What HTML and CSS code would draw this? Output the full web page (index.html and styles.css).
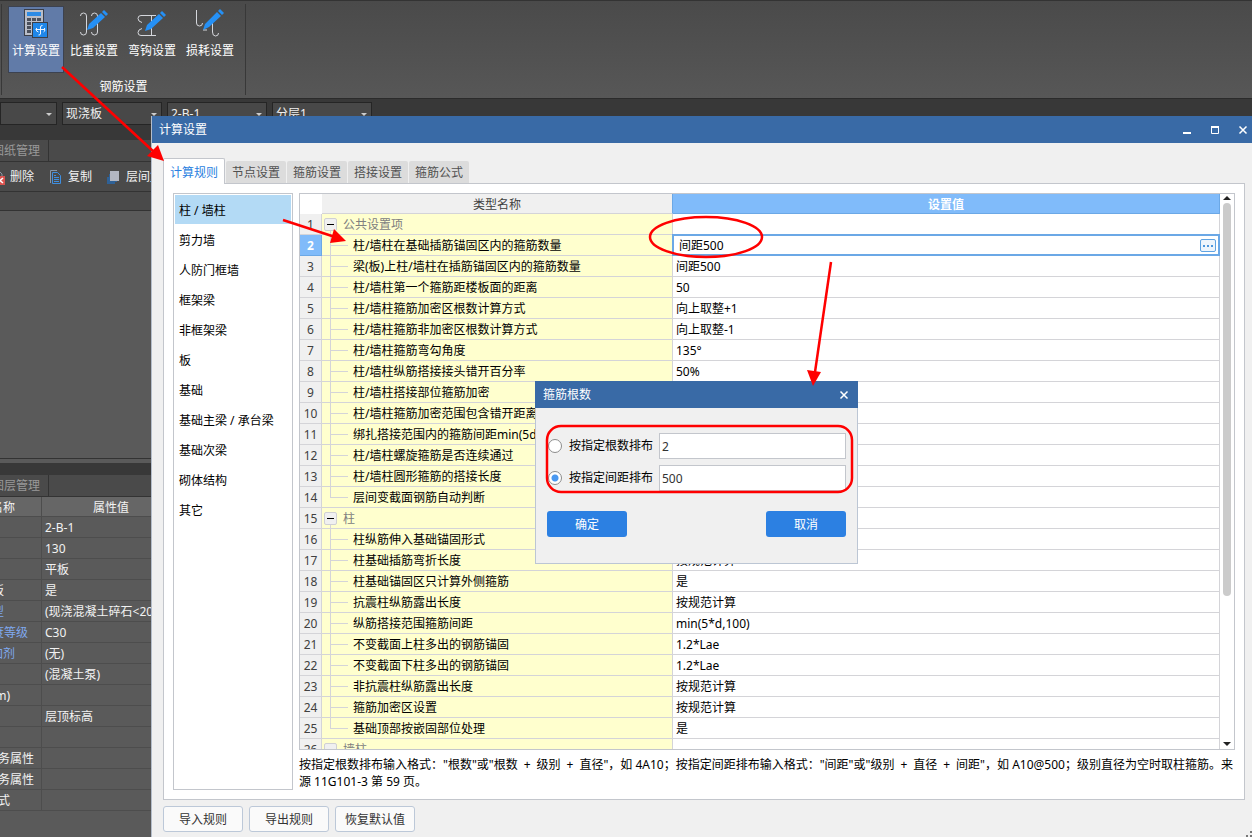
FILE: index.html
```html
<!DOCTYPE html>
<html lang="zh-CN">
<head>
<meta charset="utf-8">
<title>计算设置</title>
<link rel="stylesheet" href="styles.css">
</head>
<body>
<div class="app">
  <header class="ribbon">
    <section class="ribbon-group">
      <div class="ribbon-tools">
        <button class="tool tool-active" type="button">
          <svg width="32" height="32" viewBox="0 0 32 32">
            <rect x="4.500" y="2.500" width="19" height="26" fill="#b9bdc8" stroke="#3b3f49"/>
            <rect x="7" y="5" width="14" height="4" fill="#2a8ae6"/>
            <path d="M7 11h4v3H7zM12 11h4v3h-4zM17 11h4v3h-4zM7 15h4v3H7zM7 19h4v3H7zM7 23h4v3H7z" fill="#4b505c"/>
            <rect x="12.500" y="15.500" width="15" height="15" fill="#1f87ea" stroke="#3b3f49"/>
            <path d="M15.500 22.500h9M20.500 27v-7q0-1.500 2-1.500M20.500 27q0 1-2 1M16.500 21q-1 4 2 4M23.500 25q2 0 1-4" fill="none" stroke="#eef4ff"/>
          </svg>
          <span>计算设置</span>
        </button>
        <button class="tool" type="button">
          <svg width="32" height="32" viewBox="0 0 32 32">
            <path d="M2.500 9q0-3 3-3t3 3v16q0 3-3 3t-3-3M13.500 9q0-3 3-3t3 3v16q0 3-3 3t-3-3" fill="none" stroke="#d5d7dc"/>
            <path d="M9 23l2-6L23 6l4 4-12 11zM24 5l2-2 4 4-2 2z" fill="#2590f5"/>
          </svg>
          <span>比重设置</span>
        </button>
        <button class="tool" type="button">
          <svg width="32" height="32" viewBox="0 0 32 32">
            <path d="M20 8.500H5q-3 0-3 3t4 4M20 28.500H5q-3 0-3-3t4-4M15.500 8v20M13 8.500h5M13 28.500h5" fill="none" stroke="#d5d7dc"/>
            <path d="M9 24l2-6L23 7l4 4-12 11zM24 6l2-2 4 4-2 2z" fill="#2590f5"/>
          </svg>
          <span>弯钩设置</span>
        </button>
        <button class="tool" type="button">
          <svg width="32" height="32" viewBox="0 0 32 32">
            <path d="M2.500 3v13q0 3 3 3t3-3M18.500 15v10q0 4 3 4t3-3M9 23h4" fill="none" stroke="#d5d7dc"/>
            <path d="M9 23l2-6L23 5l4 4-12 11zM24 4l2-2 4 4-2 2z" fill="#2590f5"/>
          </svg>
          <span>损耗设置</span>
        </button>
      </div>
      <div class="ribbon-title">钢筋设置</div>
    </section>
  </header>

  <div class="selectors">
    <label class="picker picker-first"><select aria-label="楼层"><option></option></select></label>
    <label class="picker"><select aria-label="构件类型"><option>现浇板</option></select></label>
    <label class="picker"><select aria-label="构件"><option>2-B-1</option></select></label>
    <label class="picker"><select aria-label="分层"><option>分层1</option></select></label>
  </div>

  <aside class="dock">
    <div class="dock-tabs"><span class="dock-tab">图纸管理</span></div>
    <div class="dock-tools">
      <button class="dock-tool tool-delete" type="button">
        <svg width="16" height="16" viewBox="0 0 16 16"><path d="M1 1h7l4 4v10H1z" fill="none" stroke="#8c97a5"/><rect x="5" y="7" width="10" height="9" fill="#d9534f"/><path d="M7 9l6 5M13 9l-6 5" stroke="#fff" stroke-width="1.500"/></svg>
        <span>删除</span>
      </button>
      <button class="dock-tool" type="button">
        <svg width="16" height="16" viewBox="0 0 16 16"><path d="M2.500 14V1.500H9" fill="none" stroke="#8796a8"/><path d="M4.500 3.500h5l3 3v8h-8z" fill="none" stroke="#3e8ee0"/><path d="M6 8.500h5M6 10.500h5M6 12.500h5M6 6.500h2" stroke="#3e8ee0"/></svg>
        <span>复制</span>
      </button>
      <button class="dock-tool" type="button">
        <svg width="16" height="16" viewBox="0 0 16 16"><path d="M1 8h2v5h6v2H1zM3 5h2v7h6v1H3z" fill="#2f6196"/><rect x="4" y="2" width="9" height="10" fill="#b3b7c2"/></svg>
        <span>层间复制</span>
      </button>
    </div>
    <div class="dock-bar"></div>
    <div class="dock-view"></div>
    <div class="dock-split"></div>
    <div class="dock-tabs"><span class="dock-tab">图层管理</span></div>
    <table class="props">
      <thead><tr><th><span>名称</span></th><th>属性值</th></tr></thead>
      <tbody>
        <tr><td></td><td>2-B-1</td></tr>
        <tr><td></td><td>130</td></tr>
        <tr><td></td><td>平板</td></tr>
        <tr><td><span class="end-1">板</span></td><td>是</td></tr>
        <tr><td><span class="end-1 linked">型</span></td><td>(现浇混凝土碎石&lt;20)</td></tr>
        <tr><td><span class="end-4 linked">度等级</span></td><td>C30</td></tr>
        <tr><td><span class="end-3 linked">加剂</span></td><td>(无)</td></tr>
        <tr><td></td><td>(混凝土泵)</td></tr>
        <tr><td><span class="end-2">m)</span></td><td></td></tr>
        <tr><td></td><td>层顶标高</td></tr>
        <tr><td></td><td></td></tr>
        <tr><td><span class="end-5">务属性</span></td><td></td></tr>
        <tr><td><span class="end-5">务属性</span></td><td></td></tr>
        <tr><td><span class="end-2">式</span></td><td></td></tr>
      </tbody>
    </table>
  </aside>

  <main class="dialog">
    <div class="titlebar">
      <span>计算设置</span>
      <div class="window-controls">
        <button type="button" aria-label="最小化"><svg width="10" height="10" viewBox="0 0 10 10"><path d="M1 8h8" stroke="#fff" stroke-width="2"/></svg></button>
        <button type="button" aria-label="最大化"><svg width="10" height="10" viewBox="0 0 10 10"><path d="M1.500 2v6.500h7V2" fill="none" stroke="#fff"/><path d="M1 2h8" stroke="#fff" stroke-width="2"/></svg></button>
        <button type="button" aria-label="关闭"><svg width="10" height="10" viewBox="0 0 10 10"><path d="M1.500 1.500l7 7M8.500 1.500l-7 7" stroke="#fff" stroke-width="1.500"/></svg></button>
      </div>
    </div>
    <div class="dialog-body">
      <nav class="tabs">
        <button class="tab tab-active" type="button">计算规则</button>
        <button class="tab" type="button">节点设置</button>
        <button class="tab" type="button">箍筋设置</button>
        <button class="tab" type="button">搭接设置</button>
        <button class="tab" type="button">箍筋公式</button>
      </nav>
      <div class="panel">
        <ul class="categories">
          <li class="selected">柱 / 墙柱</li>
          <li>剪力墙</li>
          <li>人防门框墙</li>
          <li>框架梁</li>
          <li>非框架梁</li>
          <li>板</li>
          <li>基础</li>
          <li>基础主梁 / 承台梁</li>
          <li>基础次梁</li>
          <li>砌体结构</li>
          <li>其它</li>
        </ul>
        <div class="content">
          <div class="grid">
            <div class="grid-view">
              <table class="rules">
                <thead><tr><th class="corner"></th><th class="col-name">类型名称</th><th class="col-value">设置值</th></tr></thead>
                <tbody>
                  <tr class="group"><th>1</th><td><button class="toggle" type="button" aria-label="折叠"></button>公共设置项</td><td></td></tr>
                  <tr class="current"><th>2</th><td>柱/墙柱在基础插筋锚固区内的箍筋数量</td><td><div class="editor"><input type="text" value="间距500" aria-label="箍筋数量"><button class="more" type="button" aria-label="更多"></button></div></td></tr>
                  <tr><th>3</th><td>梁(板)上柱/墙柱在插筋锚固区内的箍筋数量</td><td>间距500</td></tr>
                  <tr><th>4</th><td>柱/墙柱第一个箍筋距楼板面的距离</td><td>50</td></tr>
                  <tr><th>5</th><td>柱/墙柱箍筋加密区根数计算方式</td><td>向上取整+1</td></tr>
                  <tr><th>6</th><td>柱/墙柱箍筋非加密区根数计算方式</td><td>向上取整-1</td></tr>
                  <tr><th>7</th><td>柱/墙柱箍筋弯勾角度</td><td>135°</td></tr>
                  <tr><th>8</th><td>柱/墙柱纵筋搭接接头错开百分率</td><td>50%</td></tr>
                  <tr><th>9</th><td>柱/墙柱搭接部位箍筋加密</td><td></td></tr>
                  <tr><th>10</th><td>柱/墙柱箍筋加密范围包含错开距离</td><td></td></tr>
                  <tr><th>11</th><td>绑扎搭接范围内的箍筋间距min(5d,100)</td><td></td></tr>
                  <tr><th>12</th><td>柱/墙柱螺旋箍筋是否连续通过</td><td></td></tr>
                  <tr><th>13</th><td>柱/墙柱圆形箍筋的搭接长度</td><td></td></tr>
                  <tr class="last"><th>14</th><td>层间变截面钢筋自动判断</td><td></td></tr>
                  <tr class="group"><th>15</th><td><button class="toggle" type="button" aria-label="折叠"></button>柱</td><td></td></tr>
                  <tr><th>16</th><td>柱纵筋伸入基础锚固形式</td><td></td></tr>
                  <tr><th>17</th><td>柱基础插筋弯折长度</td><td>按规范计算</td></tr>
                  <tr><th>18</th><td>柱基础锚固区只计算外侧箍筋</td><td>是</td></tr>
                  <tr><th>19</th><td>抗震柱纵筋露出长度</td><td>按规范计算</td></tr>
                  <tr><th>20</th><td>纵筋搭接范围箍筋间距</td><td>min(5*d,100)</td></tr>
                  <tr><th>21</th><td>不变截面上柱多出的钢筋锚固</td><td>1.2*Lae</td></tr>
                  <tr><th>22</th><td>不变截面下柱多出的钢筋锚固</td><td>1.2*Lae</td></tr>
                  <tr><th>23</th><td>非抗震柱纵筋露出长度</td><td>按规范计算</td></tr>
                  <tr><th>24</th><td>箍筋加密区设置</td><td>按规范计算</td></tr>
                  <tr class="last"><th>25</th><td>基础顶部按嵌固部位处理</td><td>是</td></tr>
                  <tr class="group"><th>26</th><td><button class="toggle" type="button" aria-label="折叠"></button>墙柱</td><td></td></tr>
                </tbody>
              </table>
            </div>
            <div class="scrollbar">
              <span class="arrow arrow-up"></span>
              <div class="track"><div class="thumb"></div></div>
              <span class="arrow arrow-down"></span>
            </div>
          </div>
          <p class="note">按指定根数排布输入格式："根数"或"根数&ensp;+&ensp;级别&ensp;+&ensp;直径"，如 4A10；按指定间距排布输入格式："间距"或"级别&ensp;+&ensp;直径&ensp;+&ensp;间距"，如 A10@500；级别直径为空时取柱箍筋。来<br>源 11G101-3 第 59 页。</p>
        </div>
      </div>
      <div class="actions">
        <button type="button">导入规则</button>
        <button type="button">导出规则</button>
        <button type="button">恢复默认值</button>
      </div>
    </div>
    <svg class="grip" width="6" height="6" viewBox="0 0 6 6"><path d="M4 0h2v2H4zM4 4h2v2H4zM0 4h2v2H0z" fill="#777"/></svg>
  </main>

  <form class="popup">
    <div class="titlebar popup-title">
      <span>箍筋根数</span>
      <div class="window-controls">
        <button type="button" aria-label="关闭"><svg width="10" height="10" viewBox="0 0 10 10"><path d="M1.500 1.500l7 7M8.500 1.500l-7 7" stroke="#fff" stroke-width="1.500"/></svg></button>
      </div>
    </div>
    <div class="popup-body">
      <div class="option">
        <input type="radio" name="mode" id="by-count">
        <label for="by-count">按指定根数排布</label>
        <input type="text" value="2" aria-label="根数">
      </div>
      <div class="option">
        <input type="radio" name="mode" id="by-space" checked>
        <label for="by-space">按指定间距排布</label>
        <input type="text" value="500" aria-label="间距">
      </div>
      <div class="popup-actions">
        <button type="button">确定</button>
        <button type="button">取消</button>
      </div>
    </div>
  </form>

  <svg class="marks" width="1252" height="837" viewBox="0 0 1252 837">
    <g fill="none" stroke="#f00" stroke-width="2.500">
      <path d="M62 67L154 152"/>
      <path d="M283 220L335 237"/>
      <path d="M831 262L815 372"/>
      <ellipse cx="706" cy="237" rx="56" ry="20"/>
      <rect x="547" y="426" width="305" height="66" rx="14"/>
    </g>
    <g fill="#f00">
      <path d="M164 161L147 156L158 145z"/>
      <path d="M346 241L330 243L334 229z"/>
      <path d="M813 386L807 370L821 372z"/>
    </g>
  </svg>
</div>
</body>
</html>
```
FILE: styles.css
```css
* { box-sizing: border-box; }

body {
  margin: 0;
  background: #383838;
  color: #000;
  font: 12px/20px "Noto Sans", "Noto Sans CJK SC", sans-serif;
}

button, input, select {
  margin: 0;
  padding: 0;
  border: 0;
  background: none;
  color: inherit;
  font: inherit;
}

svg { display: block; }

.app {
  position: relative;
  display: flex;
  flex-direction: column;
  height: 100vh;
  overflow: hidden;
}

/* Ribbon */
.ribbon {
  display: flex;
  height: 99px;
  padding: 3px 0 3px 1px;
  border-top: 1px solid #333;
  border-bottom: 1px solid #2b2b2b;
  background: linear-gradient(#4a4a4a, #575757);
  color: #fff;
}

.ribbon-group {
  display: flex;
  flex-direction: column;
  justify-content: space-between;
  width: 245px;
  padding: 2px 6px 0;
  border: solid #383838;
  border-width: 0 1px;
}

.ribbon-tools { display: flex; gap: 2px; }

.tool {
  display: flex;
  flex-direction: column;
  align-items: center;
  gap: 2px;
  width: 56px;
  height: 67px;
  border: 1px solid transparent;
  white-space: nowrap;
}

.tool-active { border-color: #3c4250; background: #617ba8; }

.ribbon-title { line-height: 16px; text-align: center; }

/* Element selectors */
.selectors {
  display: flex;
  flex: none;
  gap: 5px;
  height: 41px;
  padding-top: 3px;
  color: #f0f0f0;
}

.picker {
  position: relative;
  width: 100px;
  height: 23px;
  border: 1px solid #252525;
  background: #484848;
}

.picker-first { width: 57px; }

.picker select {
  width: 100%;
  height: 21px;
  padding-left: 3px;
  appearance: none;
}

.picker::after {
  position: absolute;
  top: 10px;
  right: 4px;
  border: 3px solid transparent;
  border-top-color: #ccc;
  border-bottom: 0;
  content: "";
}

/* Docked panels */
.dock {
  display: flex;
  flex: 1;
  flex-direction: column;
  width: 152px;
  overflow: hidden;
  background: #5a5a5a;
  color: #f2f2f2;
}

.dock-tabs {
  display: flex;
  flex: none;
  height: 22px;
  border-bottom: 1px solid #333;
  background: #4a4a4a;
  color: #999;
}

.dock-tab {
  display: flex;
  justify-content: flex-end;
  width: 49px;
  padding: 1px 8px 0 0;
  border-right: 1px solid #333;
  white-space: nowrap;
}

.dock-tools {
  display: flex;
  flex: none;
  align-items: center;
  gap: 14px;
  height: 30px;
  border-bottom: 1px solid #333;
  background: #4a4a4a;
}

.dock-tool {
  display: flex;
  flex: none;
  align-items: center;
  gap: 4px;
}

.tool-delete { margin-left: -10px; }

.dock-bar {
  flex: none;
  height: 19px;
  border-bottom: 1px solid #333;
  background: #4a4a4a;
}

.dock-view { flex: 1; border-bottom: 1px solid #333; }

.dock-split {
  flex: none;
  height: 16px;
  border-top: 4px solid #5a5a5a;
  background: #383838;
}

.props {
  flex: none;
  width: 100%;
  margin-bottom: 26px;
  border-spacing: 0;
  table-layout: fixed;
}

.props th, .props td {
  height: 21px;
  padding: 2px 0 0 3px;
  overflow: hidden;
  border-bottom: 1px solid #4d4d4d;
  line-height: 18px;
  text-align: left;
  white-space: nowrap;
}

.props th {
  height: 20px;
  padding-left: 28px;
  background: #666;
  font-weight: normal;
  line-height: 17px;
  text-align: center;
}

.props th:first-child, .props td:first-child {
  width: 42px;
  padding-left: 0;
  border-right: 1px solid #4d4d4d;
}

.props tr > :first-child span {
  display: flex;
  justify-content: flex-end;
  width: 15px;
}

.props .end-1 { width: 4px; }
.props .end-2 { width: 10px; }
.props .end-3 { width: 16px; }
.props tr > :first-child .end-1 { width: 4px; }
.props tr > :first-child .end-2 { width: 10px; }
.props tr > :first-child .end-4 { width: 28px; }
.props tr > :first-child .end-5 { width: 34px; }
.linked { color: #7fa9f0; }

/* Settings dialog */
.dialog {
  position: absolute;
  inset: 116px 0 0 151px;
  display: flex;
  flex-direction: column;
  border-left: 1px solid #b4bdca;
  background: #f0f0f0;
}

.titlebar {
  display: flex;
  flex: none;
  align-items: center;
  justify-content: space-between;
  height: 27px;
  padding: 0 4px 0 7px;
  background: #396aa6;
  color: #fff;
}

.window-controls { display: flex; gap: 18px; }

.dialog-body {
  display: flex;
  flex: 1;
  flex-direction: column;
  min-height: 0;
  padding: 15px 7px 5px 11px;
}

.tabs {
  display: flex;
  align-items: flex-end;
  gap: 1px;
  height: 25px;
}

.tab {
  width: 60px;
  height: 22px;
  padding-top: 2px;
  border-radius: 2px 2px 0 0;
  background: #dcdcdc;
  color: #505050;
}

.tab-active {
  position: relative;
  width: 62px;
  height: 26px;
  margin-bottom: -1px;
  border: 1px solid #c3c6cc;
  border-bottom: 0;
  background: #fff;
  color: #2a7fe0;
}

.panel {
  display: flex;
  flex: 1;
  gap: 6px;
  min-height: 0;
  padding: 9px;
  border: 1px solid #c3c6cc;
  background: #fff;
}

.categories {
  flex: none;
  width: 120px;
  margin: 0;
  padding: 1px;
  border: 1px solid #c3c6cc;
  list-style: none;
}

.categories li {
  height: 30px;
  padding-left: 4px;
  line-height: 32px;
  white-space: nowrap;
}

.categories .selected {
  border-bottom: 1px solid #fff;
  background: #b3daf5;
}

.content {
  display: flex;
  flex: 1;
  flex-direction: column;
  min-width: 0;
}

.grid {
  display: flex;
  flex: 1;
  min-height: 0;
  border: 1px solid #c3c6cc;
}

.grid-view { flex: 1; min-width: 0; overflow: hidden; }

.rules {
  width: 100%;
  border-spacing: 0;
  table-layout: fixed;
}

.rules th, .rules td {
  height: 21px;
  padding: 2px 0 0 3px;
  border: solid #d4d4d8;
  border-width: 0 1px 1px 0;
  line-height: 18px;
  text-align: left;
  white-space: nowrap;
}

.rules th {
  padding-left: 0;
  background: #f0f0f0;
  color: #404040;
  font-weight: normal;
  text-align: center;
}

.rules thead th { height: 20px; line-height: 17px; }
.rules .corner { width: 22px; border-color: #fff; background: #fff; }
.rules .col-name { width: 351px; border-right-color: #6ba8e6; }

.rules .col-value {
  border-color: #6ba8e6;
  background: #80bbfa;
  color: #fff;
  font-weight: bold;
}

.rules td:nth-child(2) {
  position: relative;
  padding-left: 31px;
  background: #ffffce;
}

.rules td:nth-child(2)::before {
  position: absolute;
  top: 0;
  left: 8px;
  width: 18px;
  height: 21px;
  background:
    linear-gradient(#d4d4d8, #d4d4d8) 0 0 / 1px 100% no-repeat,
    linear-gradient(#d4d4d8, #d4d4d8) 0 10px / 100% 1px no-repeat;
  content: "";
}

.rules .last td:nth-child(2)::before { height: 11px; }

.rules .group td:nth-child(2) { padding-left: 21px; color: #808080; }
.rules .group td:nth-child(2)::before { top: 17px; width: 1px; height: 4px; }

.toggle {
  position: absolute;
  top: 4px;
  left: 2px;
  width: 13px;
  height: 13px;
  border: 1px solid #d0d0d4;
  border-radius: 2px;
  background: linear-gradient(#000, #000) center / 7px 1px no-repeat #f0f0f0;
}

.rules .current th {
  border-color: #6ba8e6;
  background: #80bbfa;
  color: #fff;
  font-weight: bold;
}

.rules .current td:last-child { padding: 0; }

.editor {
  position: relative;
  display: flex;
  align-items: center;
  height: 22px;
  margin: -1px;
  padding: 0 2px 0 5px;
  border: 2px solid #6ba8e6;
  background: #fff;
}

.editor input {
  flex: 1;
  min-width: 0;
  height: 18px;
  padding-top: 1px;
  outline: 0;
}

.more {
  width: 16px;
  height: 13px;
  border: 1px solid #5fa3e2;
  border-radius: 2px;
  background:
    linear-gradient(90deg, #4c96dc 2px, transparent 2px) 2px 5px / 4px 2px repeat-x,
    #eef5fc;
}

.scrollbar {
  display: flex;
  flex: none;
  flex-direction: column;
  align-items: center;
  width: 14px;
  padding: 2px 0 3px;
}

.arrow { border: 4px solid transparent; }
.arrow-up { border-top: 0; border-bottom-color: #222; }
.arrow-down { border-bottom: 0; border-top-color: #222; }

.track { flex: 1; width: 8px; padding-top: 3px; }
.thumb { height: 73%; border-radius: 4px; background: #cbcbcb; }

.note {
  margin: 0;
  padding-top: 6px;
  line-height: 17px;
}

.actions { display: flex; gap: 6px; padding-top: 6px; }

.actions button {
  width: 80px;
  height: 26px;
  padding-top: 1px;
  border: 1px solid #bcc8d8;
  border-radius: 3px;
  background: #fafafa;
  color: #333;
}

.grip { position: absolute; right: 0; bottom: 0; }

/* Stirrup count popup */
.popup {
  position: absolute;
  top: 381px;
  left: 535px;
  width: 323px;
  border: 1px solid #bcc6d4;
  border-top: 0;
  background: #f0f0f0;
}

.popup-title { margin: 0 -1px; padding: 0 9px 0 8px; }

.popup-body {
  display: flex;
  flex-direction: column;
  gap: 6px;
  padding: 25px 11px 26px;
}

.option { display: flex; align-items: center; padding-left: 1px; }

.option input[type="radio"] {
  flex: none;
  width: 14px;
  height: 14px;
  border: 1px solid #8c8c8c;
  border-radius: 50%;
  background: #fff;
  appearance: none;
}

.option input[type="radio"]:checked {
  background: radial-gradient(circle, #4a98f0 3px, #fff 4px);
}

.option label {
  flex: none;
  width: 97px;
  padding-left: 7px;
  white-space: nowrap;
}

.option input[type="text"] {
  flex: 1;
  min-width: 0;
  height: 26px;
  padding-left: 2px;
  border: 1px solid #c3c6cc;
  background: #fff;
  color: #333;
}

.popup-actions {
  display: flex;
  justify-content: space-between;
  padding-top: 14px;
}

.popup-actions button {
  width: 80px;
  height: 26px;
  padding-top: 2px;
  border-radius: 3px;
  background: #2c80e2;
  color: #fff;
}

.marks {
  position: absolute;
  top: 0;
  left: 0;
  pointer-events: none;
}
```
